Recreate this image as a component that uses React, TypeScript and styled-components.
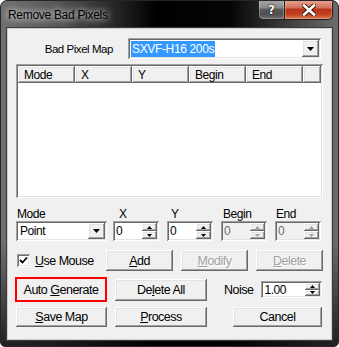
import React from "react";
import styled, { createGlobalStyle, css } from "styled-components";

const Global = createGlobalStyle`
  html, body { margin: 0; padding: 0; background: #ffffff; overflow: hidden; }
  * { box-sizing: border-box; }
`;

const raised = css`
  background: #f0f0f0;
  box-shadow: inset -1px -1px #696969, inset 1px 1px #ffffff,
    inset -2px -2px #a0a0a0, inset 2px 2px #e3e3e3;
`;

const sunken = css`
  box-shadow: inset 1px 1px #a0a0a0, inset -1px -1px #ffffff,
    inset 2px 2px #696969, inset -2px -2px #e3e3e3;
`;

const Window = styled.div`
  width: 339px;
  height: 347px;
  border: 1px solid #262626;
  border-radius: 7px 7px 5px 5px;
  background: linear-gradient(180deg, rgba(0, 0, 0, 0) 0%, rgba(0, 0, 0, 0) 70%, rgba(0, 0, 0, 0.7) 100%),
    linear-gradient(90deg, #707070 0%, #5c5c5c 14%, #262626 34%, #000000 46%, #050505 68%, #3a3a3a 84%, #6c6c6c 100%);
  display: flex;
  flex-direction: column;
  overflow: hidden;
  font-family: "Liberation Sans", Arial, sans-serif;
  font-size: 11.5px;
  letter-spacing: -0.45px;
  color: #000000;
`;

const TitleBar = styled.div`
  height: 27px;
  display: flex;
  justify-content: space-between;
  align-items: flex-start;
`;

const Title = styled.div`
  padding: 7px 0 0 7px;
  font-size: 12px;
  letter-spacing: -0.3px;
  color: #000000;
  text-shadow: 0 0 6px rgba(255, 255, 255, 0.9), 0 0 10px rgba(255, 255, 255, 0.6);
`;

const Caption = styled.div`
  display: flex;
  margin: -1px 5px 0 0;
`;

const CaptionButton = styled.div<{ $close?: boolean }>`
  width: ${({ $close }) => ($close ? 49 : 27)}px;
  height: 20px;
  display: flex;
  align-items: center;
  justify-content: center;
  border: 1px solid #1e1e1e;
  border-top: none;
  border-radius: ${({ $close }) => ($close ? "0 0 5px 0" : "0 0 0 5px")};
  margin-left: ${({ $close }) => ($close ? "-1px" : "0")};
  box-shadow: inset 0 0 0 1px rgba(255, 255, 255, 0.25);
  background: ${({ $close }) =>
    $close
      ? "linear-gradient(180deg, #e9a795 0%, #d4715c 40%, #b83318 50%, #c2401f 75%, #d97a55 100%)"
      : "linear-gradient(180deg, #a9a9a9 0%, #8a8a8a 40%, #5a5a5a 50%, #505050 75%, #707070 100%)"};
`;

const HelpGlyph = styled.span`
  color: #ffffff;
  font-family: "DejaVu Sans", sans-serif;
  font-weight: bold;
  font-size: 12px;
  letter-spacing: 0;
  text-shadow: 0 0 2px #000000, 0 0 1px #000000;
`;

const Client = styled.div`
  margin: 0 6px;
  height: 312px;
  background: #f0f0f0;
  border: 1px solid #cdcdcd;
  box-shadow: 0 0 0 1px #3c3c3c;
  display: flex;
  flex-direction: column;
`;

const Row = styled.div<{ $top: number; $left: number; $h: number }>`
  display: flex;
  align-items: center;
  margin-top: ${({ $top }) => $top}px;
  margin-left: ${({ $left }) => $left}px;
  height: ${({ $h }) => $h}px;
`;

const Label = styled.span<{ $w?: number; $right?: boolean; $ml?: number; $big?: boolean }>`
  display: inline-block;
  width: ${({ $w }) => ($w ? `${$w}px` : "auto")};
  text-align: ${({ $right }) => ($right ? "right" : "left")};
  margin-left: ${({ $ml }) => $ml ?? 0}px;
  white-space: nowrap;
  font-size: ${({ $big }) => ($big ? "12.5px" : "inherit")};
  letter-spacing: ${({ $big }) => ($big ? "-0.5px" : "inherit")};
`;

const Key = styled.span`
  text-decoration: underline;
`;

const Combo = styled.div<{ $w: number; $h: number; $ml?: number }>`
  ${sunken};
  width: ${({ $w }) => $w}px;
  height: ${({ $h }) => $h}px;
  margin-left: ${({ $ml }) => $ml ?? 0}px;
  background: #ffffff;
  display: flex;
  align-items: center;
  padding: 2px;
`;

const ComboText = styled.div<{ $selected?: boolean }>`
  flex: 1;
  height: 100%;
  display: flex;
  align-items: center;
  padding-left: ${({ $selected }) => ($selected ? 1 : 2)}px;
  font-size: 12px;
`;

const Highlight = styled.span`
  background: #3399ff;
  color: #ffffff;
  padding: 1px;
  line-height: 14px;
  font-size: 12px;
  letter-spacing: -0.35px;
`;

const DropButton = styled.div`
  ${raised};
  width: 17px;
  height: 100%;
  display: flex;
  align-items: center;
  justify-content: center;
`;

const Arrow = ({ up, color = "#000", w = 7 }: { up?: boolean; color?: string; w?: number }) => {
  const h = Math.ceil(w / 2);
  return (
    <svg width={w} height={h} viewBox={`0 0 ${w} ${h}`}>
      <polygon points={up ? `0,${h} ${w},${h} ${w / 2},0` : `0,0 ${w},0 ${w / 2},${h}`} fill={color} />
    </svg>
  );
};

const List = styled.div`
  ${sunken};
  margin: 5px 0 0 8px;
  width: 307px;
  height: 134px;
  background: #ffffff;
  padding: 2px;
`;

const Header = styled.div`
  display: flex;
  height: 17px;
`;

const HeaderCell = styled.div<{ $w?: number }>`
  ${raised};
  width: ${({ $w }) => ($w ? `${$w}px` : "auto")};
  flex: ${({ $w }) => ($w ? "none" : "1")};
  height: 100%;
  padding-left: 6px;
  display: flex;
  align-items: center;
  font-size: 12px;
`;

const FieldGrid = styled.div`
  display: grid;
  grid-template-columns: 91px 52px 54px 54px 54px;
  grid-template-rows: 14px 20px;
  margin: 9px 0 0 8px;
`;

const FieldLabel = styled.div<{ $pl: number; $ml: number }>`
  padding-left: ${({ $pl }) => $pl}px;
  margin-left: ${({ $ml }) => $ml}px;
  display: flex;
  align-items: flex-start;
  font-size: 12px;
`;

const SpinBox = styled.div<{ $ml?: number; $w?: number; $h?: number; $disabled?: boolean }>`
  ${sunken};
  width: ${({ $w }) => $w ?? 46}px;
  height: ${({ $h }) => $h ?? 20}px;
  margin-left: ${({ $ml }) => $ml ?? 0}px;
  background: ${({ $disabled }) => ($disabled ? "#f0f0f0" : "#ffffff")};
  color: ${({ $disabled }) => ($disabled ? "#6d6d6d" : "#000000")};
  display: flex;
  padding: 2px;
`;

const SpinValue = styled.div`
  flex: 1;
  display: flex;
  align-items: center;
  padding-left: 1px;
  font-size: 12px;
`;

const SpinButtons = styled.div`
  width: 15px;
  display: flex;
  flex-direction: column;
`;

const SpinHalf = styled.div`
  ${raised};
  flex: 1;
  display: flex;
  align-items: center;
  justify-content: center;
`;

const Spinner = ({
  value,
  disabled,
  ml,
  w,
  h,
}: {
  value: string;
  disabled?: boolean;
  ml?: number;
  w?: number;
  h?: number;
}) => (
  <SpinBox $ml={ml} $w={w} $h={h} $disabled={disabled}>
    <SpinValue>{value}</SpinValue>
    <SpinButtons>
      <SpinHalf>
        <Arrow up w={5} color={disabled ? "#a0a0a0" : "#000"} />
      </SpinHalf>
      <SpinHalf>
        <Arrow w={5} color={disabled ? "#a0a0a0" : "#000"} />
      </SpinHalf>
    </SpinButtons>
  </SpinBox>
);

const Button = styled.div<{ $w: number; $h: number; $ml?: number; $disabled?: boolean }>`
  ${raised};
  width: ${({ $w }) => $w}px;
  height: ${({ $h }) => $h}px;
  margin-left: ${({ $ml }) => $ml ?? 0}px;
  display: flex;
  align-items: center;
  justify-content: center;
  font-size: 12.5px;
  letter-spacing: -0.5px;
  color: ${({ $disabled }) => ($disabled ? "#a0a0a0" : "#000000")};
  text-shadow: ${({ $disabled }) => ($disabled ? "1px 1px 0 #ffffff" : "none")};
  flex: none;
`;

const Focus = styled.div`
  border: 2px solid #ff0000;
  width: 92px;
  height: 25px;
  display: flex;
`;

const FocusedButton = styled.div`
  flex: 1;
  background: #f0f0f0;
  display: flex;
  align-items: center;
  justify-content: center;
  font-size: 12.5px;
  letter-spacing: -0.5px;
`;

const CheckArea = styled.div`
  width: 89px;
  display: flex;
  align-items: center;
  flex: none;
  font-size: 12.5px;
  letter-spacing: -0.5px;
`;

const CheckBox = styled.div`
  ${sunken};
  width: 13px;
  height: 13px;
  background: #ffffff;
  display: flex;
  align-items: center;
  justify-content: center;
  margin-right: 5px;
`;

export default function App() {
  return (
    <>
      <Global />
      <Window>
        <TitleBar>
          <Title>Remove Bad Pixels</Title>
          <Caption>
            <CaptionButton>
              <HelpGlyph>?</HelpGlyph>
            </CaptionButton>
            <CaptionButton $close>
              <svg width="14" height="12" viewBox="0 0 14 12">
                <path d="M2 1.5 L12 10.5 M12 1.5 L2 10.5" stroke="#3a1a10" strokeWidth="4.6" strokeLinecap="square" />
                <path d="M2 1.5 L12 10.5 M12 1.5 L2 10.5" stroke="#ffffff" strokeWidth="2.6" strokeLinecap="square" />
              </svg>
            </CaptionButton>
          </Caption>
        </TitleBar>
        <Client>
          <Row $top={9} $left={0} $h={21}>
            <Label $w={105} $right>
              Bad Pixel Map
            </Label>
            <Combo $w={193} $h={21} $ml={15}>
              <ComboText $selected>
                <Highlight>SXVF-H16 200s</Highlight>
              </ComboText>
              <DropButton>
                <Arrow />
              </DropButton>
            </Combo>
          </Row>

          <List>
            <Header>
              <HeaderCell $w={57}>Mode</HeaderCell>
              <HeaderCell $w={57}>X</HeaderCell>
              <HeaderCell $w={57}>Y</HeaderCell>
              <HeaderCell $w={57}>Begin</HeaderCell>
              <HeaderCell $w={57}>End</HeaderCell>
              <HeaderCell />
            </Header>
          </List>

          <FieldGrid>
            <FieldLabel $pl={1} $ml={0}>Mode</FieldLabel>
            <FieldLabel $pl={6} $ml={6}>X</FieldLabel>
            <FieldLabel $pl={4} $ml={8}>Y</FieldLabel>
            <FieldLabel $pl={2} $ml={8}>Begin</FieldLabel>
            <FieldLabel $pl={1} $ml={8}>End</FieldLabel>
            <Combo $w={91} $h={20}>
              <ComboText>Point</ComboText>
              <DropButton>
                <Arrow />
              </DropButton>
            </Combo>
            <Spinner value="0" ml={6} />
            <Spinner value="0" ml={8} />
            <Spinner value="0" ml={8} disabled />
            <Spinner value="0" ml={8} disabled />
          </FieldGrid>

          <Row $top={9} $left={9} $h={21}>
            <CheckArea>
              <CheckBox>
                <svg width="9" height="9" viewBox="0 0 9 9">
                  <polyline points="1,4 3.5,6.5 8,1.5" fill="none" stroke="#000" strokeWidth="1.8" />
                </svg>
              </CheckBox>
              <Label>
                <Key>U</Key>se Mouse
              </Label>
            </CheckArea>
            <Button $w={67} $h={21}>
              <Key>A</Key>dd
            </Button>
            <Button $w={67} $h={21} $ml={8} $disabled>
              <Key>M</Key>odify
            </Button>
            <Button $w={67} $h={21} $ml={8} $disabled>
              <Key>D</Key>elete
            </Button>
          </Row>

          <Row $top={6} $left={7} $h={25}>
            <Focus>
              <FocusedButton>
                Auto&nbsp;<Key>G</Key>enerate
              </FocusedButton>
            </Focus>
            <Button $w={92} $h={22} $ml={8}>
              De<Key>l</Key>ete All
            </Button>
            <Label $ml={17} $big>
              Noise
            </Label>
            <Spinner value="1.00" ml={8} w={61} h={17} />
          </Row>

          <Row $top={5} $left={8} $h={20}>
            <Button $w={91} $h={20}>
              <Key>S</Key>ave Map
            </Button>
            <Button $w={92} $h={20} $ml={8}>
              <Key>P</Key>rocess
            </Button>
            <Button $w={89} $h={20} $ml={26}>
              Cancel
            </Button>
          </Row>
        </Client>
      </Window>
    </>
  );
}
